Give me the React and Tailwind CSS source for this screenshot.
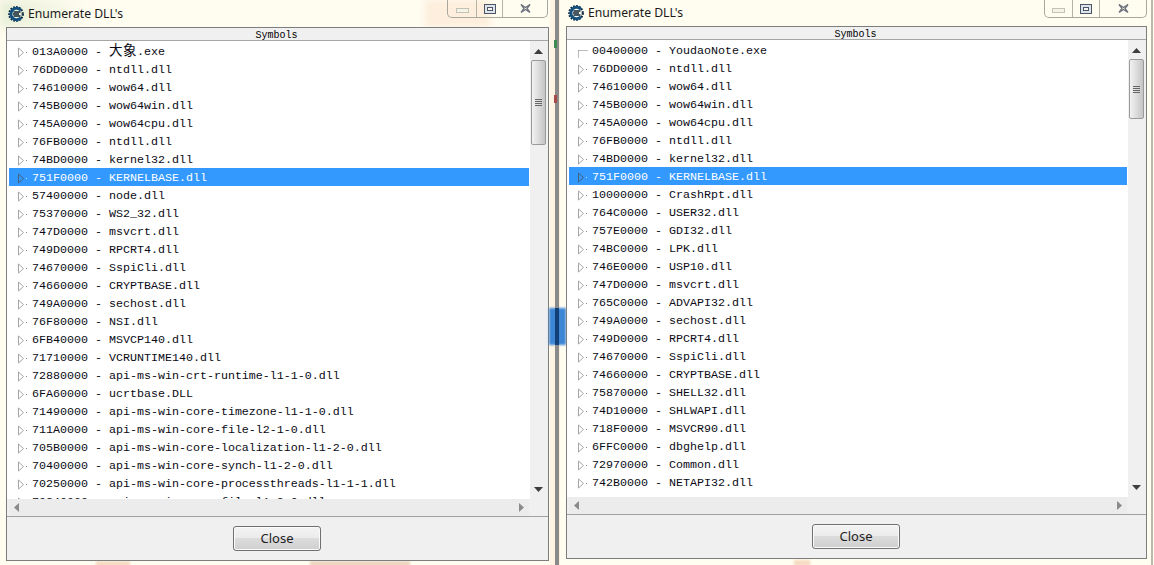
import React from "react";

const leftRows = [
  ["013A0000", "CN"],
  ["76DD0000", "ntdll.dll"],
  ["74610000", "wow64.dll"],
  ["745B0000", "wow64win.dll"],
  ["745A0000", "wow64cpu.dll"],
  ["76FB0000", "ntdll.dll"],
  ["74BD0000", "kernel32.dll"],
  ["751F0000", "KERNELBASE.dll"],
  ["57400000", "node.dll"],
  ["75370000", "WS2_32.dll"],
  ["747D0000", "msvcrt.dll"],
  ["749D0000", "RPCRT4.dll"],
  ["74670000", "SspiCli.dll"],
  ["74660000", "CRYPTBASE.dll"],
  ["749A0000", "sechost.dll"],
  ["76F80000", "NSI.dll"],
  ["6FB40000", "MSVCP140.dll"],
  ["71710000", "VCRUNTIME140.dll"],
  ["72880000", "api-ms-win-crt-runtime-l1-1-0.dll"],
  ["6FA60000", "ucrtbase.DLL"],
  ["71490000", "api-ms-win-core-timezone-l1-1-0.dll"],
  ["711A0000", "api-ms-win-core-file-l2-1-0.dll"],
  ["705B0000", "api-ms-win-core-localization-l1-2-0.dll"],
  ["70400000", "api-ms-win-core-synch-l1-2-0.dll"],
  ["70250000", "api-ms-win-core-processthreads-l1-1-1.dll"],
  ["70240000", "api-ms-win-core-file-l1-2-0.dll"],
];

const rightRows = [
  ["00400000", "YoudaoNote.exe"],
  ["76DD0000", "ntdll.dll"],
  ["74610000", "wow64.dll"],
  ["745B0000", "wow64win.dll"],
  ["745A0000", "wow64cpu.dll"],
  ["76FB0000", "ntdll.dll"],
  ["74BD0000", "kernel32.dll"],
  ["751F0000", "KERNELBASE.dll"],
  ["10000000", "CrashRpt.dll"],
  ["764C0000", "USER32.dll"],
  ["757E0000", "GDI32.dll"],
  ["74BC0000", "LPK.dll"],
  ["746E0000", "USP10.dll"],
  ["747D0000", "msvcrt.dll"],
  ["765C0000", "ADVAPI32.dll"],
  ["749A0000", "sechost.dll"],
  ["749D0000", "RPCRT4.dll"],
  ["74670000", "SspiCli.dll"],
  ["74660000", "CRYPTBASE.dll"],
  ["75870000", "SHELL32.dll"],
  ["74D10000", "SHLWAPI.dll"],
  ["718F0000", "MSVCR90.dll"],
  ["6FFC0000", "dbghelp.dll"],
  ["72970000", "Common.dll"],
  ["742B0000", "NETAPI32.dll"],
];

function CeIcon() {
  return (
    <svg width="16" height="16" viewBox="0 0 16 16" className="shrink-0">
      <circle cx="8" cy="8" r="6.8" fill="none" stroke="#0e2a40" strokeWidth="2.2" strokeDasharray="1.7 1.2" />
      <path d="M13 4.2A5.8 5.8 0 1 0 13 11.8" fill="none" stroke="#14507f" strokeWidth="3" />
      <path d="M5.5 6H12.5M5 8H11M5.5 10H12.5" stroke="#0b2235" strokeWidth="1.3" />
    </svg>
  );
}

function Expander({ corner, selected }) {
  if (corner) {
    return (
      <svg width="15" height="18" viewBox="0 0 15 18" className="shrink-0">
        <path d="M1.5 9.5H11M1.5 9.5V17" fill="none" stroke="#777" strokeDasharray="1 1" />
      </svg>
    );
  }
  return (
    <svg width="15" height="18" viewBox="0 0 15 18" className="shrink-0">
      <path d="M1.5 6V15L6.5 10.5Z" fill={selected ? "#3399ff" : "#fff"} stroke={selected ? "#44617f" : "#a6a6a6"} />
      <rect x="9" y="10" width="1" height="1" fill={selected ? "#cde" : "#888"} />
    </svg>
  );
}

function Row({ addr, name, selected, corner }) {
  return (
    <div className={`flex h-[18px] shrink-0 items-center pl-2 whitespace-pre ${selected ? "bg-[#3399ff] text-white" : "text-[#0a0a14]"}`}>
      <Expander corner={corner} selected={selected} />
      <span className="pt-[2px]">
        {addr} - {name === "CN" ? (
          <>
            <span className="text-[13.5px] leading-none tracking-[0.5px]">大象</span>.exe
          </>
        ) : (
          name
        )}
      </span>
    </div>
  );
}

function WinControls({ widths, seps }) {
  return (
    <div className={`flex h-[18px] items-stretch rounded-b-[5px] border border-t-0 border-[#a9a89c] ${widths}`}>
      <div className={`flex items-end justify-center pb-[4px] border-r border-[#b4b3a6] ${seps[0]}`}>
        <div className="h-[5px] w-[13px] border border-[#c3c2b6] bg-[#f4f3e6]" />
      </div>
      <div className={`flex items-center justify-center border-r border-[#b4b3a6] ${seps[1]}`}>
        <div className="flex h-[10px] w-[12px] items-center justify-center border border-[#4a5568] bg-[#dfe3ea]">
          <div className="h-[4px] w-[6px] border border-[#4a5568] bg-[#f6f6f6]" />
        </div>
      </div>
      <div className="flex flex-1 items-center justify-center">
        <svg width="13" height="11" viewBox="0 0 13 11">
          <path d="M2 1.5L6.5 4.5L11 1.5M2 9.5L6.5 6.5L11 9.5M2 1.5L5 5.5L2 9.5M11 1.5L8 5.5L11 9.5" fill="#fbfbf4" stroke="#70757d" strokeWidth="1.3" />
        </svg>
      </div>
    </div>
  );
}

function VScroll({ thumb }) {
  return (
    <div className="flex w-[17px] shrink-0 flex-col items-center bg-[#f0f0f0]">
      <svg width="9" height="5" viewBox="0 0 9 5" className="mt-[8px] shrink-0">
        <path d="M4.5 0L9 5H0Z" fill="#3e3e3e" />
      </svg>
      <div className={`mt-[6px] flex w-[15px] shrink-0 items-center justify-center rounded-[2px] border border-[#9a9a9a] bg-gradient-to-r from-[#f2f2f2] via-[#dcdcdc] to-[#c4c4c4] ${thumb}`}>
        <div className="flex w-[7px] flex-col gap-[1px]">
          <div className="h-[1px] bg-[#666]" />
          <div className="h-[1px] bg-[#666]" />
          <div className="h-[1px] bg-[#666]" />
          <div className="h-[1px] bg-[#666]" />
        </div>
      </div>
      <div className="flex-1" />
      <svg width="9" height="5" viewBox="0 0 9 5" className="mb-[7px] shrink-0">
        <path d="M4.5 5L9 0H0Z" fill="#3e3e3e" />
      </svg>
    </div>
  );
}

function HScroll() {
  return (
    <div className="ml-[2px] mr-[19px] flex h-[17px] shrink-0 items-center justify-between bg-[#ececec] px-[5px]">
      <svg width="5" height="9" viewBox="0 0 5 9">
        <path d="M0 4.5L5 0V9Z" fill="#8a8a8a" />
      </svg>
      <svg width="5" height="9" viewBox="0 0 5 9">
        <path d="M5 4.5L0 0V9Z" fill="#8a8a8a" />
      </svg>
    </div>
  );
}

function Window({ rows, outer, titleH, titleGap, controls, seps, panelH, listH, thumb, firstCorner }) {
  return (
    <div className={`relative flex shrink-0 flex-col pl-[6px] ${outer}`}>
      <div className={`flex items-start justify-between ${titleH}`}>
        <div className={`flex items-center gap-[4px] pl-[2px] ${titleGap}`}>
          <CeIcon />
          <span className="font-['Noto_Sans',sans-serif] text-[12.2px] leading-none text-[#1a1a1a]">Enumerate DLL's</span>
        </div>
        <WinControls widths={controls} seps={seps} />
      </div>
      <div className={`flex flex-col border border-[#7d7d7d] bg-[#f0f0f0] ${panelH}`}>
        <div className="flex h-[12px] shrink-0 items-center justify-center pt-[3px] pr-[2px] font-['Liberation_Mono',monospace] text-[10px] leading-none text-black">
          Symbols
        </div>
        <div className="h-[1px] shrink-0 bg-[#a6a6a6]" />
        <div className={`flex shrink-0 overflow-hidden bg-white ${listH}`}>
          <div className="flex min-w-0 flex-1 flex-col overflow-hidden pt-[1px] pl-[2px] pr-[1px] font-['Liberation_Mono','Noto_Sans_CJK_SC',monospace] text-[11.67px] leading-[18px]">
            {rows.map(([a, n], i) => (
              <Row key={a + i} addr={a} name={n} selected={i === 7} corner={firstCorner && i === 0} />
            ))}
          </div>
          <VScroll thumb={thumb} />
          <div className="w-[1px] shrink-0 bg-[#f0f0f0]" />
        </div>
        <HScroll />
        <div className="h-[1px] shrink-0 bg-[#a0a0a0]" />
        <div className="flex flex-1 justify-center pt-[9px] pr-[1px]">
          <div className="flex h-[25px] w-[88px] items-center justify-center rounded-[3px] border border-[#707070] bg-[linear-gradient(#f3f3f3_0%,#ebebeb_48%,#dcdcdc_50%,#cfcfcf_100%)] font-['Noto_Sans',sans-serif] text-[13px] leading-none text-[#1e1e1e] shadow-[inset_0_0_0_1px_#fafafa]">
            Close
          </div>
        </div>
      </div>
    </div>
  );
}

export default function App() {
  return (
    <div className="relative flex h-[565px] w-[1154px] overflow-hidden bg-[#fffcf0]">
      <div className="absolute left-0 top-0 h-[27px] w-[90px] bg-gradient-to-r from-[#e6eed6] to-[#fffcf0] blur-[4px]" />
      <div className="absolute left-[425px] top-0 h-[27px] w-[65px] bg-[#fdeedd] blur-[3px]" />
      <div className="absolute left-[96px] top-[561px] h-[6px] w-[34px] bg-[#f6dcc2] blur-[1px]" />
      <div className="absolute left-[310px] top-[561px] h-[6px] w-[100px] bg-[#ecd6c0] blur-[1px]" />
      <div className="absolute left-[794px] top-[560px] h-[6px] w-[16px] bg-[#f6dcc2] blur-[1px]" />

      <Window
        rows={leftRows}
        outer="w-[550px]"
        titleH="h-[27px]"
        titleGap="pt-[6px]"
        controls="mr-[2px] w-[101px]"
        seps={["w-[29px]", "w-[26px]"]}
        panelH="h-[534px] w-[543px]"
        listH="h-[458px]"
        thumb="h-[85px]"
      />

      <div className="relative w-[10px] shrink-0 bg-[linear-gradient(90deg,#fff5e6,#fdeedd)]">
        <div className="absolute left-[-1px] top-[308px] h-[37px] w-[17px] bg-[#3d86d6] blur-[1px]" />
        <div className="absolute left-[5px] top-0 h-[565px] w-[4px] bg-[#8a8a8a]" />
        <div className="absolute left-[5px] top-[308px] h-[37px] w-[4px] bg-[#123f78]" />
        <div className="absolute left-[4px] top-[40px] h-[8px] w-[3px] bg-[#3f8a50]" />
        <div className="absolute left-[4px] top-[95px] h-[8px] w-[3px] bg-[#a84848]" />
      </div>

      <Window
        rows={rightRows}
        outer="w-[592px]"
        titleH="h-[26px]"
        titleGap="pt-[5px]"
        controls="mr-[5px] w-[103px]"
        seps={["w-[28px]", "w-[27px]"]}
        panelH="h-[533px] w-[581px]"
        listH="h-[457px]"
        thumb="h-[60px]"
        firstCorner
      />
      <div className="absolute left-[1151px] top-0 h-[565px] w-[2px] bg-[#b9b9ae]" />
    </div>
  );
}
